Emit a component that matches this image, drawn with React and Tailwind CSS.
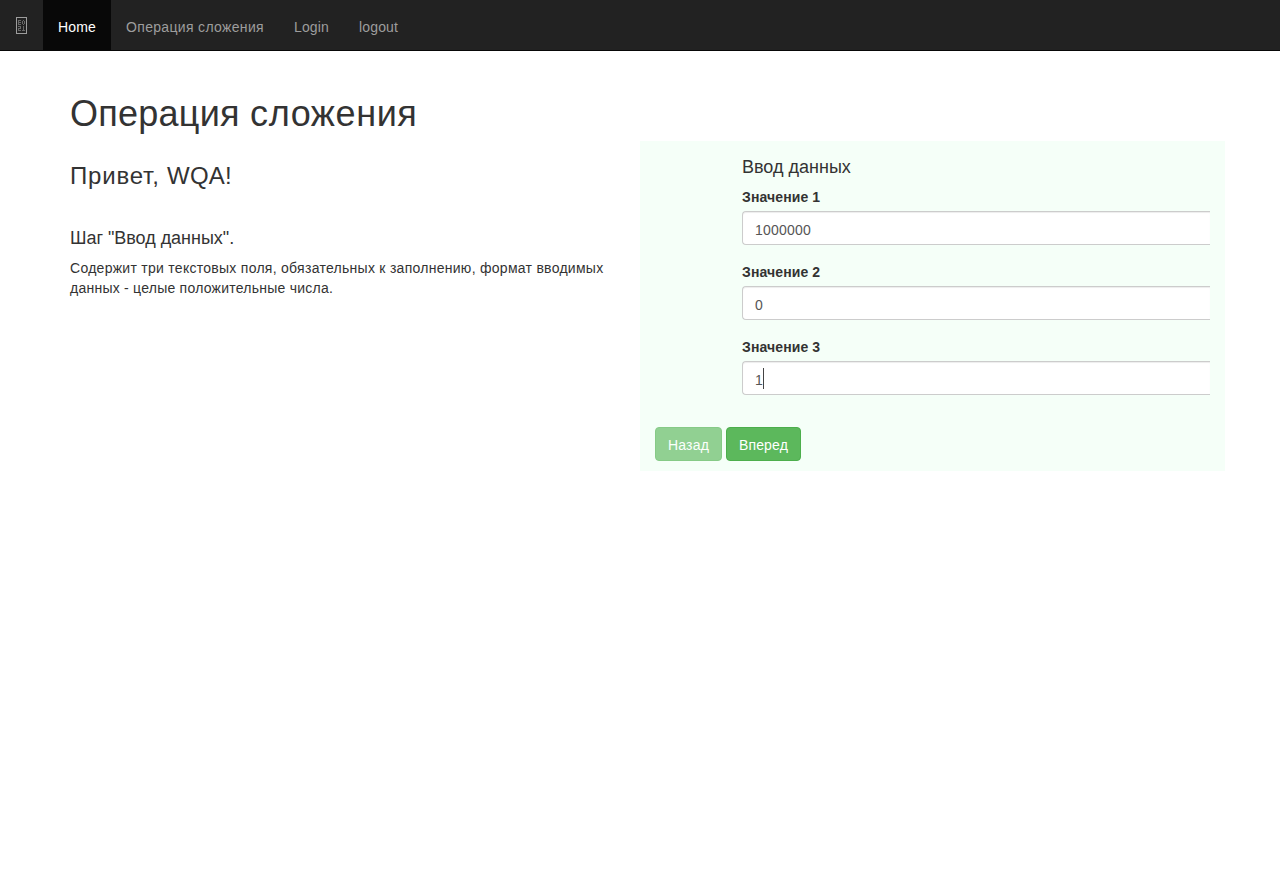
const navItems = [
  { text: "Операция сложения", tracking: "w-[168px] tracking-[0.33px]" },
  { text: "Login", tracking: "w-[65px] tracking-[0.15px]" },
  { text: "logout", tracking: "w-[69px] tracking-[0.15px]" },
];

function Field({ label, value, focused }) {
  return (
    <div className="mb-[17px]">
      <label className="mb-1 block h-5 font-bold tracking-[0.11px]">{label}</label>
      <div className="flex h-[34px] items-center rounded-l-[4px] border border-r-0 border-[#ccc] bg-white px-3 pt-[3px] text-[#555] shadow-[inset_0_1px_1px_rgba(0,0,0,0.075)]">
        <span className="tracking-[0.2px]">{value}</span>
        {focused && <span className="-mt-[3px] h-[21px] w-px bg-[#444]" />}
      </div>
    </div>
  );
}

export default function App() {
  return (
    <div className="min-h-[873px] overflow-hidden bg-white font-['Liberation_Sans',sans-serif] text-[14px] leading-5 text-[#333]">
      <nav className="flex h-[51px] whitespace-nowrap border-b border-[#080808] bg-[#222] text-[#9d9d9d]">
        <a className="flex w-[43px] items-center justify-center">
          <svg width="11" height="17" viewBox="0 0 11 17" fill="none" stroke="currentColor" shapeRendering="crispEdges">
            <path d="M.5.5h10v16H.5z" />
            <g stroke="#686868">
              <path d="M5 3.500H2.500v4H5M2.500 5.500H5M6.500 4v3M8.500 4v3M7 3.500h1M7 7.500h1" />
              <path d="M2 9.500h2.500v2h-2v2H5M7.500 9v5M6 13.500h3M6.500 9.500h1" />
            </g>
          </svg>
        </a>
        <a className="w-[68px] bg-[#080808] px-[15px] pt-[17px] tracking-[0.15px] text-white">Home</a>
        {navItems.map((item) => (
          <a key={item.text} className={"px-[15px] pt-[17px] " + item.tracking}>{item.text}</a>
        ))}
      </nav>
      <main className="px-[70px] pt-10">
        <h1 className="h-[50px] pt-[3px] text-[36px] leading-[40px] tracking-[0.25px]">
          Операция <span className="tracking-[0.6px]">сложения</span>
        </h1>
        <div className="flex">
          <section className="w-[570px] shrink-0 pr-[30px]">
            <h2 className="pt-[22px] text-[24px] leading-[26px] tracking-[0.8px]">
              Привет, <span className="tracking-[0.15px]">WQA!</span>
            </h2>
            <h3 className="mt-[39px] text-[18px] leading-5 tracking-[-0.03px]">Шаг "Ввод данных".</h3>
            <p className="mt-[10px] whitespace-nowrap">
              <span className="tracking-[0.275px]">Содержит три текстовых поля, обязательных к заполнению, формат вводимых</span>
              <br />
              <span className="tracking-[0.24px]">данных - целые положительные числа.</span>
            </p>
          </section>
          <section className="h-[330px] w-[585px] shrink-0 bg-[#f5fff8] px-[15px] pt-4">
            <div className="pl-[87px]">
              <h3 className="mb-[10px] text-[18px] leading-5">Ввод данных</h3>
              <Field label="Значение 1" value="1000000" />
              <Field label="Значение 2" value="0" />
              <Field label="Значение 3" value="1" focused />
            </div>
            <div className="mt-8 flex gap-1 text-white">
              <button className="h-[34px] w-[67px] rounded-[4px] border border-[#4cae4c] bg-[#5cb85c] pt-[2px] tracking-[0.2px] opacity-65">Назад</button>
              <button className="h-[34px] w-[75px] rounded-[4px] border border-[#4cae4c] bg-[#5cb85c] pt-[2px] tracking-[0.17px]">Вперед</button>
            </div>
          </section>
        </div>
      </main>
    </div>
  );
}
